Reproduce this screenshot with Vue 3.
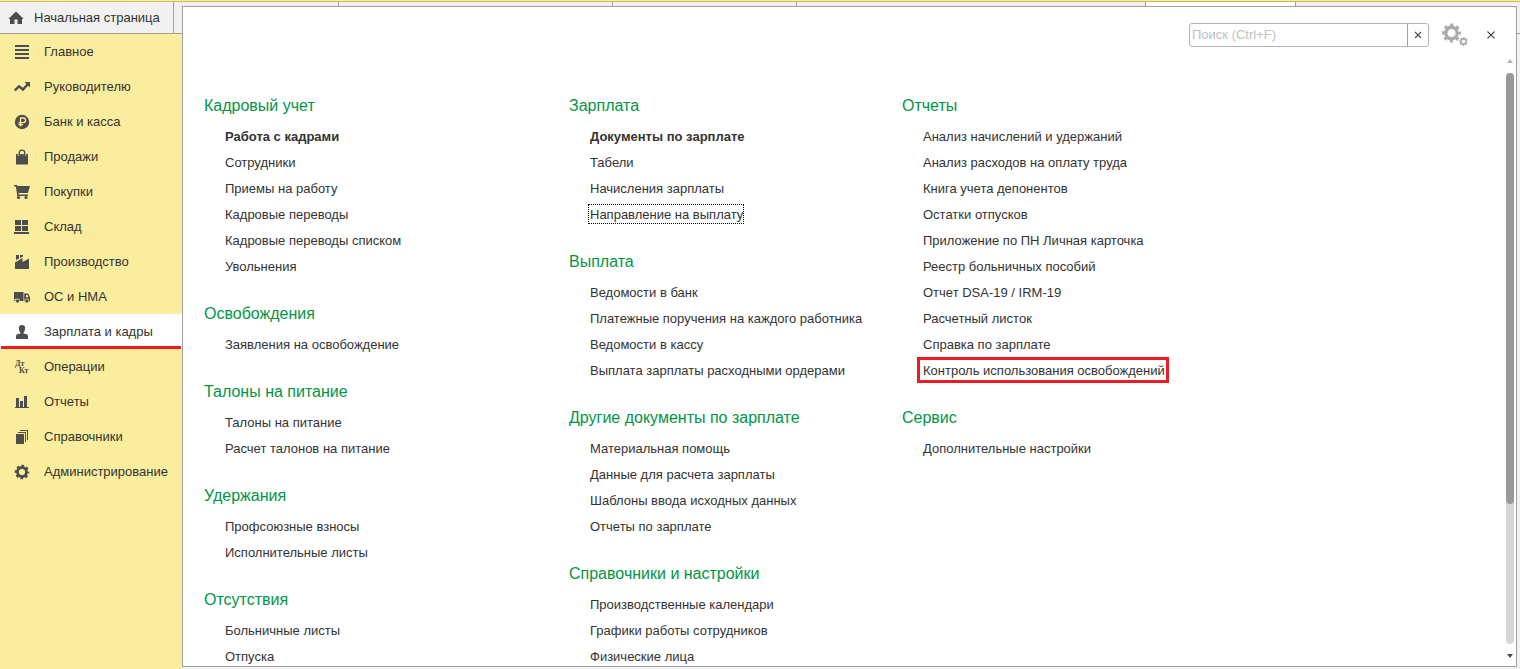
<script setup>
const sections = [
  { id: 'main', label: 'Главное' },
  { id: 'chief', label: 'Руководителю' },
  { id: 'bank', label: 'Банк и касса' },
  { id: 'sales', label: 'Продажи' },
  { id: 'cart', label: 'Покупки' },
  { id: 'stock', label: 'Склад' },
  { id: 'factory', label: 'Производство' },
  { id: 'truck', label: 'ОС и НМА' },
  { id: 'person', label: 'Зарплата и кадры', active: true },
  { id: 'ops', label: 'Операции' },
  { id: 'reports', label: 'Отчеты' },
  { id: 'books', label: 'Справочники' },
  { id: 'admin', label: 'Администрирование' }
]

const columns = [
  [
    { title: 'Кадровый учет', items: ['Работа с кадрами', 'Сотрудники', 'Приемы на работу', 'Кадровые переводы', 'Кадровые переводы списком', 'Увольнения'] },
    { title: 'Освобождения', items: ['Заявления на освобождение'] },
    { title: 'Талоны на питание', items: ['Талоны на питание', 'Расчет талонов на питание'] },
    { title: 'Удержания', items: ['Профсоюзные взносы', 'Исполнительные листы'] },
    { title: 'Отсутствия', items: ['Больничные листы', 'Отпуска'] }
  ],
  [
    { title: 'Зарплата', items: ['Документы по зарплате', 'Табели', 'Начисления зарплаты', 'Направление на выплату'] },
    { title: 'Выплата', items: ['Ведомости в банк', 'Платежные поручения на каждого работника', 'Ведомости в кассу', 'Выплата зарплаты расходными ордерами'] },
    { title: 'Другие документы по зарплате', items: ['Материальная помощь', 'Данные для расчета зарплаты', 'Шаблоны ввода исходных данных', 'Отчеты по зарплате'] },
    { title: 'Справочники и настройки', items: ['Производственные календари', 'Графики работы сотрудников', 'Физические лица'] }
  ],
  [
    { title: 'Отчеты', items: ['Анализ начислений и удержаний', 'Анализ расходов на оплату труда', 'Книга учета депонентов', 'Остатки отпусков', 'Приложение по ПН Личная карточка', 'Реестр больничных пособий', 'Отчет DSA-19 / IRM-19', 'Расчетный листок', 'Справка по зарплате', 'Контроль использования освобождений'] },
    { title: 'Сервис', items: ['Дополнительные настройки'] }
  ]
]

const marks = {
  'Работа с кадрами': 'important',
  'Документы по зарплате': 'important',
  'Направление на выплату': 'focused',
  'Контроль использования освобождений': 'framed'
}
</script>

<template>
  <div class="app">
    <nav class="tabs" aria-label="Открытые окна">
      <a class="tab home" href="#">
        <svg class="icon" viewBox="0 0 16 16" aria-hidden="true"><path d="M8 1.500 15.700 9H14v5H9.500v-4.500h-3V14H2V9H.3z" /></svg>
        <span>Начальная страница</span>
      </a>
      <span class="tab t1"></span>
      <span class="tab t2"></span>
      <span class="tab t3"></span>
      <span class="tab t4"></span>
      <span class="tab t5"></span>
    </nav>

    <nav class="sidebar" aria-label="Разделы">
      <a v-for="s in sections" :key="s.id" href="#" class="section" :class="{ active: s.active }">
        <svg class="icon" viewBox="0 0 16 16" aria-hidden="true">
          <path v-if="s.id === 'main'" d="M1 1h14v2H1zM1 5h14v2H1zM1 9h14v2H1zM1 13h14v2H1z" />
          <g v-else-if="s.id === 'chief'">
            <path d="M.8 11.500 5 7.300l4 3.200L13.500 5.500" fill="none" stroke="currentColor" stroke-width="2.400" />
            <path d="M10.500 3H16v5.500z" />
          </g>
          <g v-else-if="s.id === 'bank'">
            <circle cx="8" cy="8" r="7.200" />
            <path class="cut" d="M6.500 12.500V4h2.700a2.300 2.300 0 0 1 0 4.700H4.500M4.500 10.700H9" />
          </g>
          <g v-else-if="s.id === 'sales'">
            <path d="M2 5h12v10.500H2z" />
            <path d="M5 7V3.500C5 .2 11 .2 11 3.500V7" fill="none" stroke="#fbed9e" stroke-width="2.400" />
            <path d="M5.300 7V3.500C5.300.3 10.700.3 10.700 3.500V7" fill="none" stroke="currentColor" stroke-width="1.400" />
          </g>
          <g v-else-if="s.id === 'cart'">
            <path d="M0 1h3l.5 1H16l-2 7H4.500v1.500H14V12H3V9.500L1.800 2.500H0z" />
            <circle cx="4.500" cy="13.500" r="1.600" /><circle cx="12" cy="13.500" r="1.600" />
          </g>
          <path v-else-if="s.id === 'stock'" d="M1 1h6v5H1zM8 1h6v5H8zM1 7h6v5H1zM8 7h6v5H8zM0 13h15v2H0z" />
          <path v-else-if="s.id === 'factory'" d="M2 1h3v3.500L2 6zM6 1h3v1.500L6 4zM1 8.500 8.500 4v4L15 4.500V15H1z" />
          <g v-else-if="s.id === 'truck'">
            <path d="M0 3h9.500v9H0zM10.200 4.500H14L16 8v4.500h-5.800z" />
            <path d="M12 6h1.500l1 2.200H12zM0 10.200h2v.8H0z" fill="#fbed9e" />
            <g stroke="#fbed9e" stroke-width=".8"><circle cx="3.500" cy="12" r="2.100" /><circle cx="12.800" cy="12" r="2.100" /></g>
          </g>
          <path v-else-if="s.id === 'person'" d="M8 1c2.300 0 3.300 1.400 3.100 3.400C10.900 6.500 10.200 7.700 9.600 8.300v1.200l3 .8c1 .3 1.400 1 1.400 2V15H2v-2.700c0-1 .4-1.700 1.400-2l3-.8V8.300C5.800 7.700 5.100 6.500 4.900 4.400 4.700 2.400 5.700 1 8 1z" />
          <g v-else-if="s.id === 'ops'" class="letters">
            <text x="1" y="7">Дт</text><text x="5" y="14">Кт</text>
          </g>
          <path v-else-if="s.id === 'reports'" d="M2 4h3v9H2zM6 7h3v6H6zM10 2h3v11h-3zM1 13h14v1H1z" />
          <path v-else-if="s.id === 'books'" d="M2 5h8v10H2zM4 3h8v10h-1V4H4zM6 1h8v10h-1V2H6z" />
          <g v-else fill="none" stroke="currentColor">
            <circle cx="8" cy="8" r="4.500" stroke-width="2.800" />
            <circle cx="8" cy="8" r="6.200" stroke-width="2.200" stroke-dasharray="2.600 2.270" stroke-dashoffset="1.300" />
          </g>
        </svg>
        <span class="label">{{ s.label }}</span>
      </a>
    </nav>

    <main class="panel">
      <header class="toolbar">
        <div class="search">
          <input type="text" placeholder="Поиск (Ctrl+F)" aria-label="Поиск" />
          <button type="button" aria-label="Очистить">
            <svg class="cross" viewBox="0 0 8 8"><path d="M1 1l6 6M7 1L1 7" /></svg>
          </button>
        </div>
        <button class="plain gears" type="button" aria-label="Настройки">
          <svg viewBox="0 0 26 24" fill="none" stroke="#aaa">
            <circle cx="9.500" cy="10" r="5.700" stroke-width="3.400" />
            <circle cx="9.500" cy="10" r="8.200" stroke-width="2.600" stroke-dasharray="3.200 3.240" stroke-dashoffset="1.600" />
            <circle cx="21.500" cy="18.500" r="2.600" stroke-width="1.600" />
            <circle cx="21.500" cy="18.500" r="3.800" stroke-width="1.300" stroke-dasharray="1.500 1.485" stroke-dashoffset=".75" />
          </svg>
        </button>
        <button class="plain" type="button" aria-label="Закрыть">
          <svg class="cross" viewBox="0 0 8 8"><path d="M.5.5l7 7M7.500.5l-7 7" /></svg>
        </button>
      </header>

      <div class="columns">
        <div v-for="(column, i) in columns" :key="i" class="column">
          <section v-for="group in column" :key="group.title" class="group">
            <h2>{{ group.title }}</h2>
            <ul>
              <li v-for="item in group.items" :key="item">
                <a href="#" :class="marks[item]">{{ item }}</a>
              </li>
            </ul>
          </section>
        </div>
      </div>

      <div class="scrollbar" aria-hidden="true">
        <svg class="arrow up" viewBox="0 0 6 4"><path d="M3 0l3 4H0z" /></svg>
        <div class="track"><div class="thumb"></div></div>
        <svg class="arrow" viewBox="0 0 6 4"><path d="M0 0h6L3 4z" /></svg>
      </div>
    </main>
  </div>
</template>

<style>
body {
  margin: 0;
}
</style>

<style scoped>
.app {
  position: relative;
  box-sizing: border-box;
  display: flex;
  flex-direction: column;
  height: 100vh;
  min-height: 500px;
  overflow: hidden;
  border-top: 1px solid #fbed9e;
  background: #f1f1f1;
  color: #333;
  font: 13px/26px "Liberation Sans", Arial, sans-serif;
}
a {
  color: inherit;
  text-decoration: none;
}
.tabs {
  display: flex;
  flex: none;
  height: 31px;
  border-top: 1px solid #cdbb60;
  border-bottom: 1px solid #a0a0a0;
}
.tab {
  box-sizing: border-box;
  border-right: 1px solid #a0a0a0;
}
.home {
  display: flex;
  align-items: center;
  gap: 10px;
  width: 174px;
  padding-left: 8px;
}
.t1 { width: 165px; }
.t2 { width: 274px; }
.t3 { width: 184px; }
.t4 { width: 349px; }
.t5 { width: 150px; background: #fff; }
.icon {
  flex: none;
  width: 16px;
  height: 16px;
  color: #4d4d4d;
  fill: currentColor;
}
.sidebar {
  flex: 1;
  width: 182px;
  background: #fbed9e;
}
.section {
  display: flex;
  align-items: center;
  box-sizing: border-box;
  gap: 14px;
  height: 35px;
  padding-left: 14px;
}
.section.active {
  margin: 0 1px;
  padding-left: 13px;
  background: #fff;
  box-shadow: -1px 0 #fff, 1px 0 #fff, inset 0 -3px #ed1c24;
}
.label {
  padding-top: 1px;
}
.cut {
  fill: none;
  stroke: #fbed9e;
  stroke-width: 1.3;
}
.letters {
  font: bold 8px "Liberation Serif", serif;
}
.panel {
  position: absolute;
  inset: 5px 3px 2px 182px;
  display: grid;
  grid-template-columns: minmax(0, 1fr) 10px;
  grid-template-rows: 46px minmax(0, 1fr);
  border: 1px solid #a0a0a0;
  background: #fff;
}
.toolbar {
  grid-column: 1 / -1;
  display: flex;
  align-items: center;
  justify-content: flex-end;
  gap: 12px;
  padding: 10px 16px 0 0;
}
.search {
  display: flex;
  box-sizing: border-box;
  width: 240px;
  height: 24px;
  border: 1px solid #b3b3b3;
  border-radius: 3px;
}
.search input {
  flex: 1;
  min-width: 0;
  padding: 0 2px;
  border: 0;
  background: none;
  outline: 0;
  font: inherit;
}
.search input::placeholder {
  color: #c0c0c0;
  opacity: 1;
}
.search button,
.plain {
  display: flex;
  align-items: center;
  justify-content: center;
  padding: 0;
  border: 0;
  background: none;
}
.search button {
  width: 21px;
  border-left: 1px solid #a0a0a0;
}
.plain {
  width: 18px;
  height: 24px;
}
.gears {
  width: 28px;
  margin-right: 1px;
}
.gears svg {
  width: 26px;
  height: 24px;
}
.cross {
  width: 8px;
  height: 8px;
  stroke: #4d4d4d;
  stroke-width: 1.1;
}
.columns {
  display: grid;
  grid-template-columns: 365fr 333fr 604fr;
  padding: 40px 0 0 21px;
  overflow: hidden;
}
.group {
  margin-bottom: 21px;
}
h2 {
  margin: 0;
  color: #009646;
  font-size: 16px;
  font-weight: 400;
  line-height: 26px;
}
ul {
  margin: 0;
  padding: 5px 0 0 21px;
  list-style: none;
}
li {
  height: 26px;
  white-space: nowrap;
}
.important {
  font-weight: 700;
}
.focused {
  padding: 2px 0 1px 1px;
  margin-left: -2px;
  border: 1px dotted #000;
}
.framed {
  margin-left: -6px;
  padding: 3px 1px 2px 3px;
  border: 3px solid #ed1c24;
}
.scrollbar {
  display: flex;
  flex-direction: column;
  align-items: center;
  gap: 10px;
  width: 8px;
  padding: 6px 0 8px;
}
.arrow {
  flex: none;
  width: 6px;
  height: 4px;
  fill: #4d4d4d;
}
.up {
  fill: #b3b3b3;
}
.track {
  flex: 1;
  width: 8px;
  border-radius: 4px;
  background: #d6d6d6;
}
.thumb {
  height: 75.5%;
  border-radius: 4px;
  background: #999;
}
</style>
